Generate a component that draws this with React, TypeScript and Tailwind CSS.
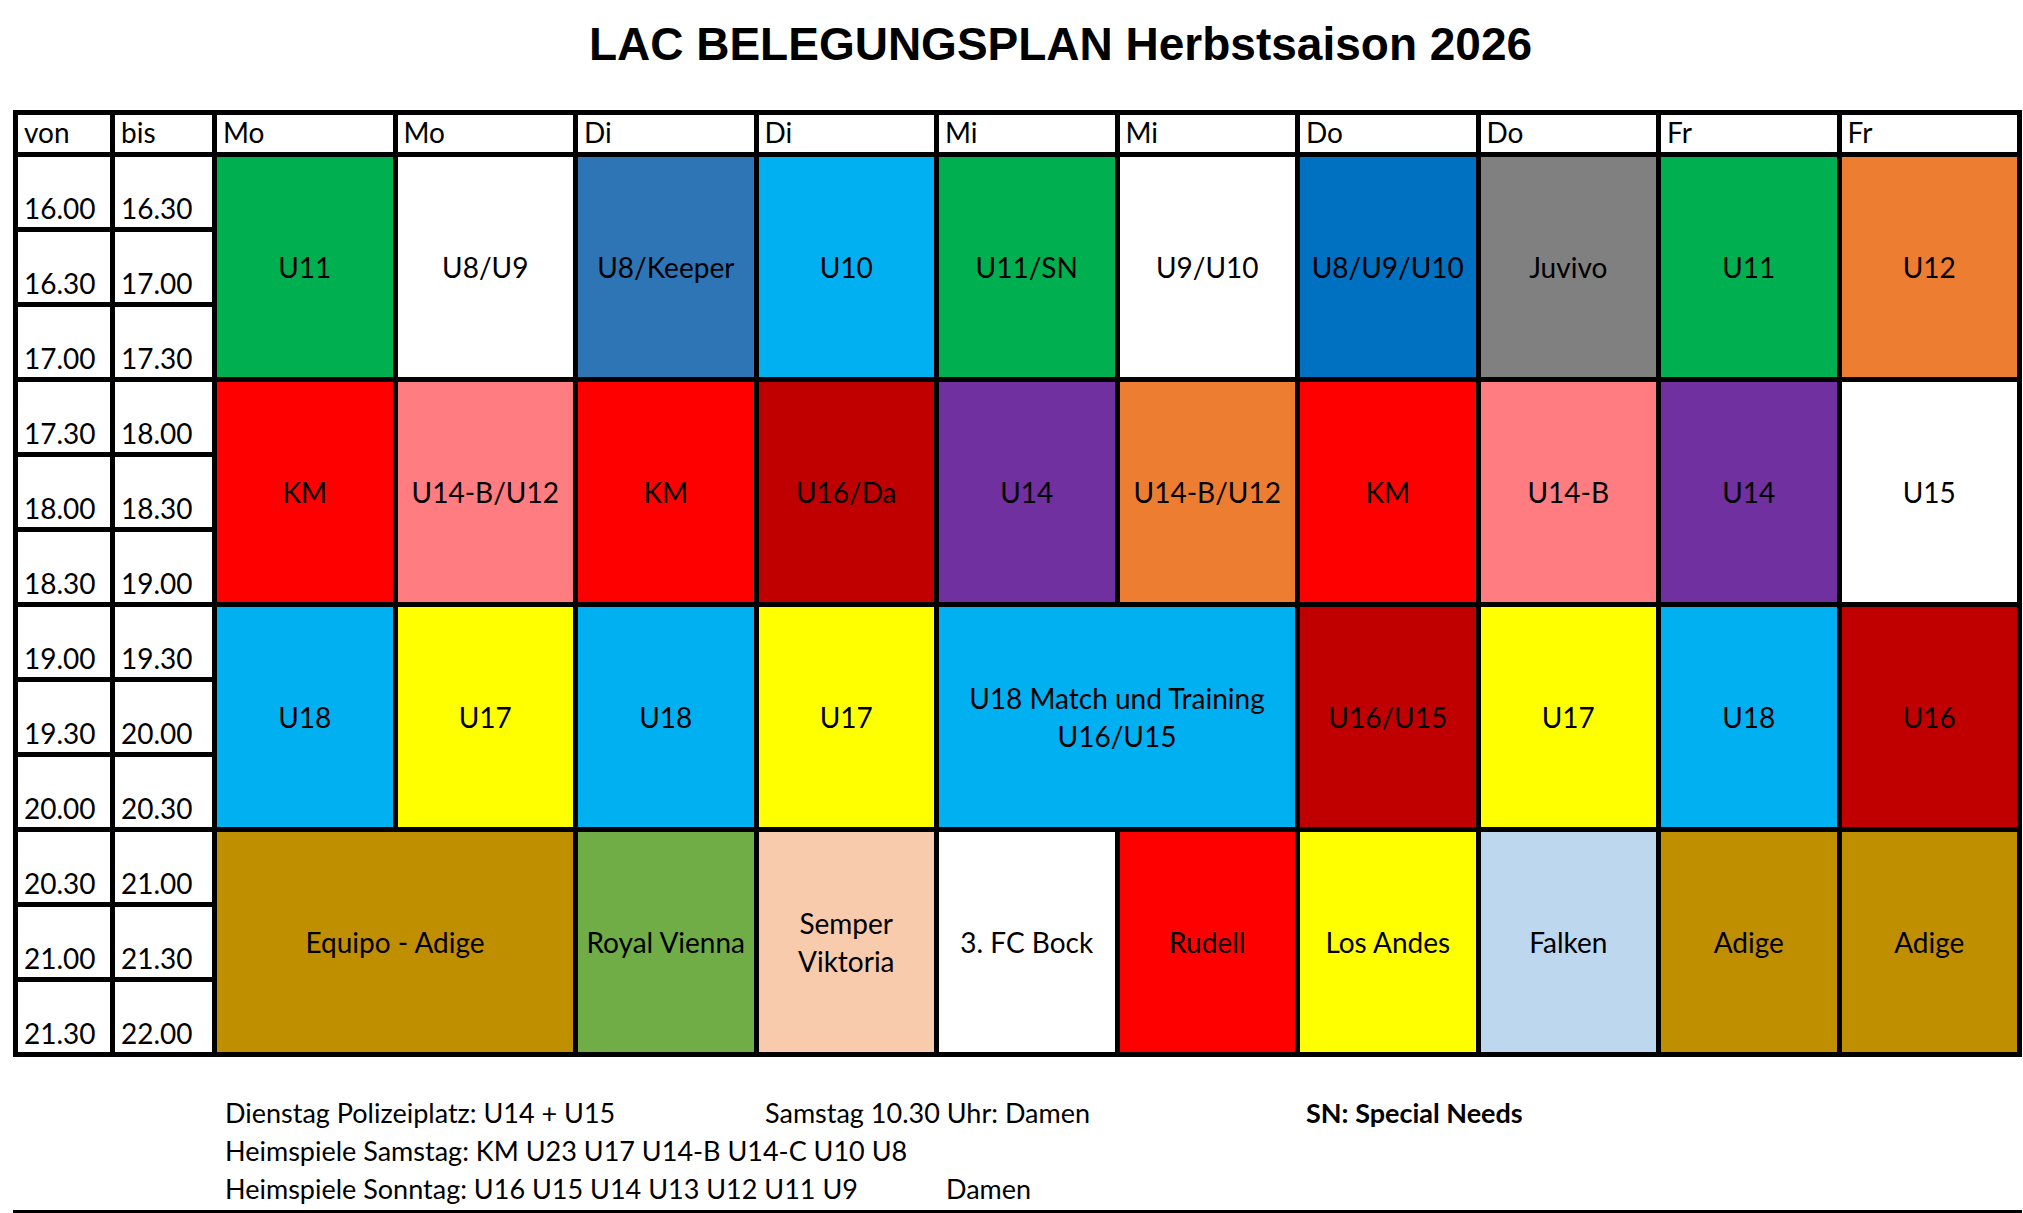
const days = ['Mo', 'Mo', 'Di', 'Di', 'Mi', 'Mi', 'Do', 'Do', 'Fr', 'Fr'];

const times = [
  '16.00', '16.30', '17.00', '17.30', '18.00', '18.30',
  '19.00', '19.30', '20.00', '20.30', '21.00', '21.30', '22.00',
];

type Block = { lines: string[]; bg: string; wide?: boolean };

// one entry per 3-row block (1.5 hours), left to right
const groups: Block[][] = [
  [
    { lines: ['U11'], bg: 'bg-[#00b050]' },
    { lines: ['U8/U9'], bg: 'bg-white' },
    { lines: ['U8/Keeper'], bg: 'bg-[#2e75b6]' },
    { lines: ['U10'], bg: 'bg-[#00b0f0]' },
    { lines: ['U11/SN'], bg: 'bg-[#00b050]' },
    { lines: ['U9/U10'], bg: 'bg-white' },
    { lines: ['U8/U9/U10'], bg: 'bg-[#0070c0]' },
    { lines: ['Juvivo'], bg: 'bg-[#808080]' },
    { lines: ['U11'], bg: 'bg-[#00b050]' },
    { lines: ['U12'], bg: 'bg-[#ed7d31]' },
  ],
  [
    { lines: ['KM'], bg: 'bg-[#ff0000]' },
    { lines: ['U14-B/U12'], bg: 'bg-[#ff7c80]' },
    { lines: ['KM'], bg: 'bg-[#ff0000]' },
    { lines: ['U16/Da'], bg: 'bg-[#c00000]' },
    { lines: ['U14'], bg: 'bg-[#7030a0]' },
    { lines: ['U14-B/U12'], bg: 'bg-[#ed7d31]' },
    { lines: ['KM'], bg: 'bg-[#ff0000]' },
    { lines: ['U14-B'], bg: 'bg-[#ff7c80]' },
    { lines: ['U14'], bg: 'bg-[#7030a0]' },
    { lines: ['U15'], bg: 'bg-white' },
  ],
  [
    { lines: ['U18'], bg: 'bg-[#00b0f0]' },
    { lines: ['U17'], bg: 'bg-[#ffff00]' },
    { lines: ['U18'], bg: 'bg-[#00b0f0]' },
    { lines: ['U17'], bg: 'bg-[#ffff00]' },
    { lines: ['U18 Match und Training', 'U16/U15'], bg: 'bg-[#00b0f0]', wide: true },
    { lines: ['U16/U15'], bg: 'bg-[#c00000]' },
    { lines: ['U17'], bg: 'bg-[#ffff00]' },
    { lines: ['U18'], bg: 'bg-[#00b0f0]' },
    { lines: ['U16'], bg: 'bg-[#c00000]' },
  ],
  [
    { lines: ['Equipo - Adige'], bg: 'bg-[#bf8f00]', wide: true },
    { lines: ['Royal Vienna'], bg: 'bg-[#70ad47]' },
    { lines: ['Semper', 'Viktoria'], bg: 'bg-[#f8cbad]' },
    { lines: ['3. FC Bock'], bg: 'bg-white' },
    { lines: ['Rudell'], bg: 'bg-[#ff0000]' },
    { lines: ['Los Andes'], bg: 'bg-[#ffff00]' },
    { lines: ['Falken'], bg: 'bg-[#bdd7ee]' },
    { lines: ['Adige'], bg: 'bg-[#bf8f00]' },
    { lines: ['Adige'], bg: 'bg-[#bf8f00]' },
  ],
];

const TimeCells = ({ row }: { row: number }) => (
  <>
    <div className="bg-white flex items-end pl-[6px] pb-[5px] leading-none">{times[row]}</div>
    <div className="bg-white flex items-end pl-[6px] pb-[5px] leading-none">{times[row + 1]}</div>
  </>
);

export default function App() {
  return (
    <div className="w-[2023px] h-[1213px] overflow-hidden bg-white text-black font-[Lato,sans-serif]">
      {/* Title */}
      <div className="pt-[21px] pl-[98px] text-center font-['Liberation_Sans',Arial,sans-serif] font-bold text-[46px] leading-none">
        LAC BELEGUNGSPLAN Herbstsaison 2026
      </div>

      {/* Schedule */}
      <div className="mt-[43px] ml-[13px] w-[2009px] grid grid-cols-[92px_97px_repeat(10,minmax(0,1fr))] grid-rows-[37px_repeat(12,70px)] gap-[5px] p-[5px] bg-black text-[28px]">
        <div className="bg-white flex items-end pl-[6px] pb-[6px] leading-none">von</div>
        <div className="bg-white flex items-end pl-[6px] pb-[6px] leading-none">bis</div>
        {days.map((d, i) => (
          <div key={i} className="bg-white flex items-end pl-[6px] pb-[6px] leading-none">{d}</div>
        ))}

        {groups.map((blocks, g) => (
          <div key={g} className="contents">
            <TimeCells row={g * 3} />
            {blocks.map((b, i) => (
              <div
                key={i}
                className={`${b.bg} ${b.wide ? 'col-span-2' : ''} row-span-3 flex flex-col items-center justify-center text-center leading-[38px] whitespace-nowrap`}
              >
                {b.lines.map((l, j) => (
                  <span key={j}>{l}</span>
                ))}
              </div>
            ))}
            <TimeCells row={g * 3 + 1} />
            <TimeCells row={g * 3 + 2} />
          </div>
        ))}
      </div>

      {/* Notes */}
      <div className="mt-[37px] ml-[225px] text-[27px] leading-[38px] whitespace-nowrap">
        <div className="flex">
          <span className="w-[540px]">Dienstag Polizeiplatz: U14 + U15</span>
          <span className="w-[541px]">Samstag 10.30 Uhr: Damen</span>
          <span className="font-bold">SN: Special Needs</span>
        </div>
        <div>Heimspiele Samstag: KM U23 U17 U14-B U14-C U10 U8</div>
        <div className="flex">
          <span className="w-[721px]">Heimspiele Sonntag: U16 U15 U14 U13 U12 U11 U9</span>
          <span>Damen</span>
        </div>
      </div>
      <div className="mt-[2px] ml-[13px] w-[2009px] h-[4px] bg-black" />
    </div>
  );
}
